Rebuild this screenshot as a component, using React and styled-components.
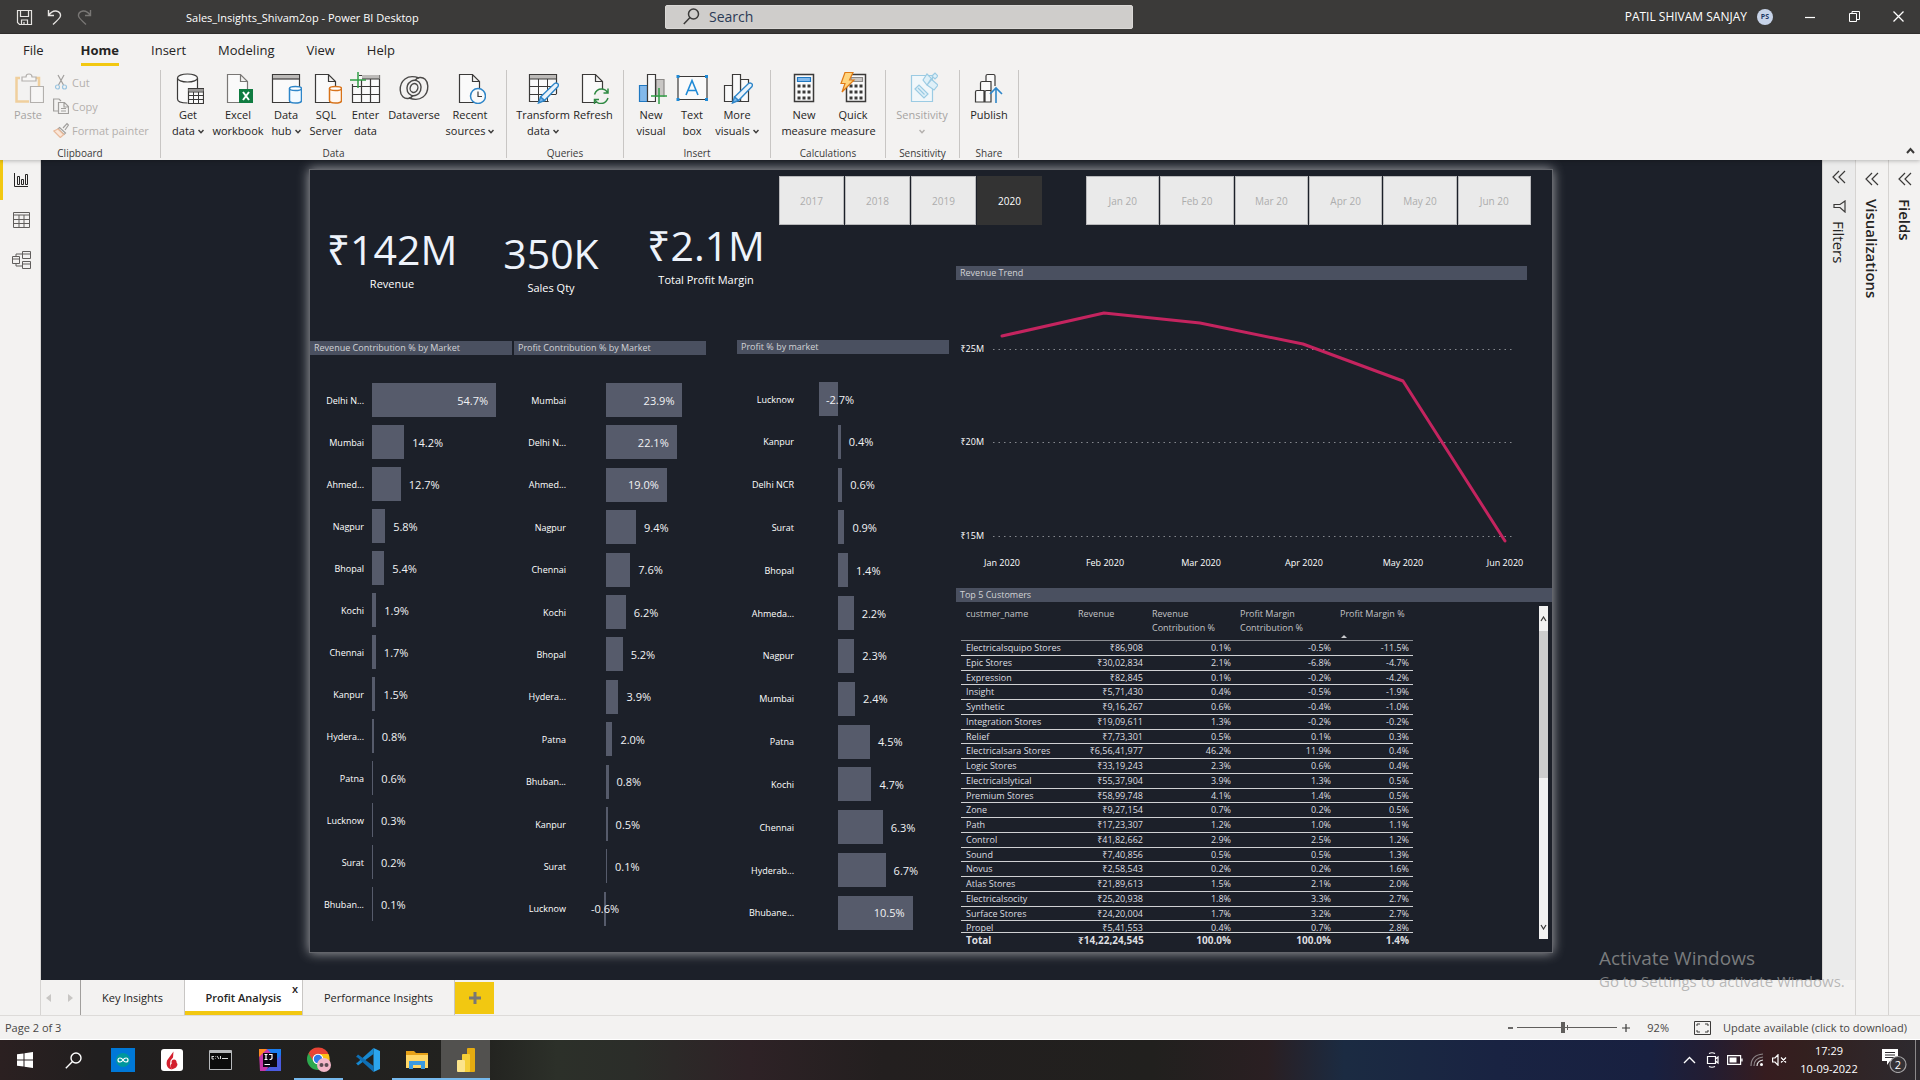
import React from "react";
import styled, { createGlobalStyle, css } from "styled-components";

const Global = createGlobalStyle`
  *, *::before, *::after { box-sizing: border-box; }
  body {
    margin: 0;
    overflow: hidden;
    background: #f3f2f1;
    color: #252423;
    font-family: "Open Sans", "Noto Sans", sans-serif;
    font-size: 11px;
  }
  button, input { font: inherit; color: inherit; margin: 0; padding: 0; border: 0; background: none; }
  h1, h2, p { margin: 0; font: inherit; }
  svg { display: block; flex: none; }
`;

const Shell = styled.div`
  display: flex;
  flex-direction: column;
  height: 100vh;
`;

/* ---------- title bar ---------- */

const TitleBar = styled.header`
  display: grid;
  grid-template-columns: 665fr 468fr 787fr;
  align-items: center;
  height: 34px;
  flex: none;
  background: #3b3a39;
  border-bottom: 1px solid #32302f;
  color: #fff;
`;
const TitleLeft = styled.div`
  display: flex;
  align-items: center;
  padding: 2px 0 0 16px;
`;
const QuickButton = styled.button`
  width: 30px;
  height: 24px;
`;
const DocTitle = styled.h1`
  margin-left: 80px;
  line-height: 16px;
  white-space: nowrap;
`;
const SearchBox = styled.label`
  display: flex;
  align-items: center;
  gap: 9px;
  height: 24px;
  padding-left: 17px;
  background: #cfcdcb;
  border: 1px solid #dad8d6;
  border-radius: 2px;
  color: #3b3a39;
`;
const SearchInput = styled.input`
  flex: 1;
  outline: none;
  font-size: 14px;
  &::placeholder { color: #2b3a55; opacity: 1; }
`;
const TitleRight = styled.div`
  display: flex;
  align-items: center;
  justify-content: flex-end;
  font-size: 12px;
`;
const Avatar = styled.span`
  display: grid;
  place-items: center;
  width: 16px;
  height: 16px;
  margin: 0 15px 0 10px;
  border-radius: 50%;
  background: #c7d3e8;
  color: #1f3864;
  font-size: 7px;
  font-weight: 700;
`;
const WindowButton = styled.button`
  display: grid;
  place-items: center;
  width: 44px;
  height: 32px;
`;

/* ---------- ribbon ---------- */

const Ribbon = styled.div`
  position: relative;
  z-index: 2;
  flex: none;
  height: 126px;
  background: #f3f2f1;
  box-shadow: 0 1px 4px rgba(0, 0, 0, 0.25);
`;
const Tabs = styled.nav`
  display: flex;
  gap: 32px;
  height: 36px;
  padding-left: 23px;
`;
const Tab = styled.button`
  height: 32px;
  padding-top: 2px;
  font-size: 13px;
  border-bottom: 3px solid ${(p) => (p.$active ? "#f2c811" : "transparent")};
  font-weight: ${(p) => (p.$active ? 700 : 400)};
  &:first-child { margin-right: 5px; }
`;
const Groups = styled.div`
  display: flex;
  height: 88px;
`;
const Group = styled.section`
  display: flex;
  flex-direction: column;
  width: ${(p) => p.$width}px;
  border-right: 1px solid #c8c6c4;
`;
const Tools = styled.div`
  display: flex;
  flex: 1;
  padding-left: ${(p) => p.$pad || 8}px;
`;
const Tool = styled.button`
  display: flex;
  flex-direction: column;
  align-items: center;
  width: ${(p) => p.$width}px;
  padding-top: 2px;
  line-height: 16px;
  white-space: nowrap;
  color: ${(p) => (p.$off ? "#a6a4a2" : "#252423")};
  svg.icon { margin-bottom: 3px; }
`;
const Line = styled.span`
  display: flex;
  align-items: center;
  gap: 3px;
  height: 16px;
`;
const GroupName = styled.h2`
  height: 12px;
  font-size: 10px;
  line-height: 14px;
  text-align: center;
  color: #3b3a39;
`;
const ClipList = styled.div`
  display: flex;
  flex-direction: column;
  margin-left: 3px;
`;
const ClipButton = styled.button`
  display: flex;
  align-items: center;
  gap: 3px;
  height: 24px;
  color: #b3b0ad;
  white-space: nowrap;
`;
const Collapse = styled.button`
  position: absolute;
  right: 5px;
  bottom: 6px;
`;

/* ---------- workspace ---------- */

const Workspace = styled.div`
  display: flex;
  flex: 1;
  min-height: 0;
`;
const Rail = styled.nav`
  display: flex;
  flex-direction: column;
  width: 41px;
  border-right: 1px solid #d6d4d2;
`;
const RailButton = styled.button`
  display: grid;
  place-items: center;
  width: 40px;
  height: 40px;
  border-left: 3px solid ${(p) => (p.$active ? "#f2c811" : "transparent")};
`;
const Center = styled.main`
  display: flex;
  flex-direction: column;
  flex: 1;
  min-width: 0;
`;
const CanvasRow = styled.div`
  display: flex;
  flex: 1;
  min-height: 0;
`;
const Canvas = styled.div`
  position: relative;
  display: flex;
  flex: 1;
  min-width: 0;
  padding: 10px 270px 28px 269px;
  background: #1c2029;
`;
const Page = styled.article`
  display: flex;
  flex-direction: column;
  flex: 1;
  min-width: 0;
  padding-top: 6px;
  background: #1c2029;
  box-shadow: 0 0 0 1px #63656b, 0 0 11px 1px #a5a6aa;
  color: #fff;
`;
const Watermark = styled.div`
  position: absolute;
  z-index: 3;
  right: -14px;
  bottom: -11px;
  color: rgba(160, 160, 160, 0.72);
  white-space: nowrap;
`;
const WatermarkTitle = styled.p`
  font-size: 19px;
  line-height: 26px;
`;
const WatermarkText = styled.p`
  width: 237px;
  font-size: 15px;
  line-height: 20px;
`;

const SlicerRow = styled.div`
  display: flex;
  justify-content: flex-end;
  gap: 44px;
  height: 49px;
  padding-right: 21px;
`;
const Slicer = styled.div`
  display: flex;
  gap: 1px;
  width: ${(p) => p.$width}px;
`;
const SlicerButton = styled.button`
  flex: 1;
  border: 1px solid ${(p) => (p.$active ? "#333" : "#b9b9bb")};
  background: ${(p) => (p.$active ? "#333" : "#eaeaea")};
  color: ${(p) => (p.$active ? "#fff" : "#adadad")};
  font-size: 10px;
`;
const Body = styled.div`
  display: grid;
  grid-template-columns: 646fr 596fr;
  flex: 1;
  min-height: 0;
`;
const Column = styled.div`
  display: flex;
  flex-direction: column;
  min-width: 0;
`;
const Kpis = styled.div`
  display: grid;
  grid-template-columns: 164fr 154fr 156fr 172fr;
  height: 115px;
`;
const Kpi = styled.div`
  display: flex;
  flex-direction: column;
  align-items: center;
  gap: 7px;
  padding-top: ${(p) => p.$top}px;
  font-size: 11px;
  line-height: 16px;
  white-space: nowrap;
`;
const KpiValue = styled.strong`
  font-size: 41px;
  font-weight: 400;
  line-height: 40px;
  color: #eef3fb;
`;
const Charts = styled.div`
  display: grid;
  grid-template-columns: 204fr 223fr 219fr;
  flex: 1;
`;
const Chart = styled.section`
  display: flex;
  flex-direction: column;
  min-width: 0;
  padding: ${(p) => p.$pad};
`;
const VisualTitle = styled.h2`
  flex: none;
  height: 14px;
  margin-right: ${(p) => p.$right || 0}px;
  padding-left: 4px;
  background: #4a5060;
  color: #d2d3d6;
  font-size: 9px;
  line-height: 14px;
  white-space: nowrap;
`;
const BarList = styled.div`
  display: flex;
  flex-direction: column;
  justify-content: space-between;
  flex: 1;
  padding-top: 28px;
`;
const BarRow = styled.div`
  display: flex;
  align-items: center;
  height: 34px;
`;
const BarName = styled.span`
  flex: none;
  width: ${(p) => p.$width}px;
  margin-right: ${(p) => p.$gap}px;
  text-align: right;
  white-space: nowrap;
  font-size: 9px;
`;
const Track = styled.div`
  display: flex;
  align-items: center;
  flex: 1;
  min-width: 0;
  height: 100%;
`;
const Bar = styled.div`
  display: flex;
  align-items: center;
  justify-content: flex-end;
  flex: none;
  min-width: 1px;
  height: 100%;
  background: #565b6b;
`;
const BarValue = styled.span`
  position: relative;
  margin: 0 8px;
  font-size: 11px;
  color: #f1f2f4;
`;
const TableArea = styled.div`
  display: flex;
  justify-content: space-between;
  padding: 0 4px 0 5px;
`;
const columns = css`
  display: grid;
  grid-template-columns: 112px 74px 88px 100px 78px;
`;
const Table = styled.table`
  display: block;
  width: 452px;
  color: #dddee0;
  font-size: 9px;
  line-height: 14px;
`;
const Thead = styled.thead`
  display: block;
  border-bottom: 1px solid #8c8e93;
`;
const HeadRow = styled.tr`
  ${columns}
  height: 38px;
`;
const Th = styled.th`
  padding: 5px 0 0 5px;
  font-weight: 400;
  text-align: left;
  color: #c3c4c7;
`;
const Sort = styled.svg`
  margin: 14px 0 0 1px;
`;
const Tbody = styled.tbody`
  display: grid;
  grid-template-rows: repeat(20, 1fr);
  height: 295px;
  margin-bottom: -4px;
  clip-path: inset(0 0 4px 0);
`;
const Tr = styled.tr`
  ${columns}
  min-height: 0;
  border-bottom: 1px solid #d0d1d3;
`;
const Td = styled.td`
  height: 13px;
  padding: 0 4px 0 5px;
  text-align: ${(p) => (p.$num ? "right" : "left")};
  white-space: nowrap;
`;
const Tfoot = styled.tfoot`
  display: block;
  border-top: 1px solid #d0d1d3;
`;
const TotalRow = styled.tr`
  ${columns}
  font-size: 10px;
  font-weight: 700;
`;
const ScrollBar = styled.div`
  display: flex;
  flex-direction: column;
  width: 9px;
  height: 333px;
  margin-top: 4px;
  background: #f1f1f1;
`;
const ScrollButton = styled.button`
  display: grid;
  place-items: center;
  height: 25px;
`;
const ScrollThumb = styled.div`
  height: 147px;
  margin-bottom: auto;
  background: #cdcdcd;
`;

/* ---------- side panes ---------- */

const Pane = styled.aside`
  display: flex;
  flex-direction: column;
  align-items: center;
  gap: ${(p) => (p.$filters ? 16 : 13)}px;
  width: ${(p) => p.$width || 33}px;
  padding-top: ${(p) => (p.$filters ? 10 : 12)}px;
  border-left: 1px solid #d6d4d2;
  background: ${(p) => (p.$filters ? "#ebebeb" : "#f3f2f1")};
`;
const PaneName = styled.span`
  display: flex;
  align-items: center;
  gap: 8px;
  writing-mode: vertical-rl;
  font-size: 15px;
  line-height: 20px;
  font-weight: ${(p) => (p.$filters ? 400 : 600)};
`;

/* ---------- page tabs and status bar ---------- */

const PageTabs = styled.nav`
  display: flex;
  height: 35px;
  flex: none;
`;
const Arrows = styled.div`
  display: flex;
  align-items: center;
  gap: 16px;
  width: 40px;
  padding-left: 5px;
  border-right: 1px solid #a19f9d;
`;
const PageTab = styled.button`
  position: relative;
  width: ${(p) => p.$width}px;
  border-right: 1px solid #c8c6c4;
  white-space: nowrap;
  ${(p) =>
    p.$active &&
    css`
      background: #fff;
      font-weight: 600;
      box-shadow: inset 0 -4px #f2c811;
    `}
`;
const CloseMark = styled.span`
  position: absolute;
  top: 1px;
  right: 4px;
`;
const AddPage = styled.button`
  display: grid;
  place-items: center;
  width: 39px;
  margin: 2px 0 1px;
  background: #f2c811;
`;
const StatusBar = styled.footer`
  display: flex;
  align-items: center;
  flex: none;
  height: 25px;
  padding: 0 6px 0 5px;
  border-top: 1px solid #dddbd9;
  border-bottom: 1px solid #fff;
  background: #f3f2f1;
  color: #484644;
`;
const ZoomControls = styled.div`
  display: flex;
  align-items: center;
  gap: 4px;
  margin-left: auto;
`;
const ZoomSlider = styled.input`
  appearance: none;
  width: 100px;
  height: 12px;
  background:
    linear-gradient(#605e5c, #605e5c) 50px 3px / 1px 5px no-repeat,
    linear-gradient(#605e5c, #605e5c) 0 5px / 100px 1px no-repeat;
  &::-webkit-slider-thumb {
    appearance: none;
    width: 4px;
    height: 11px;
    background: #605e5c;
  }
`;
const ZoomValue = styled.span`
  margin: 0 25px 0 16px;
`;
const UpdateLink = styled.a`
  width: 191px;
  margin-left: 12px;
  color: inherit;
  text-decoration: none;
  white-space: nowrap;
`;

/* ---------- taskbar ---------- */

const Taskbar = styled.footer`
  display: flex;
  flex: none;
  height: 40px;
  background: linear-gradient(
    90deg, #2b2021 0%, #211f1f 5%, #22221f 25%, #2c3029 29%, #2b2d29 33%, #2e2226 39%,
    #231f1f 46%, #21201e 60%, #2a1f22 66%, #1b2b42 70%, #192342 78%, #182040 86%,
    #231d32 89%, #361c1f 92%, #33201f 94%, #2d2a2f 100%
  );
  color: #fff;
`;
const TaskButton = styled.button`
  display: grid;
  place-items: center;
  width: 49px;
  height: 40px;
  background: ${(p) => (p.$active ? "#52514f" : "none")};
  box-shadow: ${(p) => (p.$open ? "inset 0 -2px #76b9ed" : "none")};
`;
const Tray = styled.div`
  display: flex;
  align-items: center;
  margin-left: auto;
`;
const TrayButton = styled.button`
  display: grid;
  place-items: center;
  width: ${(p) => p.$width || 22}px;
  height: 40px;
`;
const Clock = styled.time`
  width: 78px;
  line-height: 18px;
  text-align: center;
  margin-right: 5px;
`;
const Edge = styled.span`
  width: 5px;
  height: 40px;
  border-left: 1px solid #8b888a;
`;

/* ---------- icons ---------- */

const INK = "#3b3a39";
const Svg = ({ w = 32, h = 32, vw = w, vh = h, children, ...rest }) => (
  <svg width={w} height={h} viewBox={`0 0 ${vw} ${vh}`} fill="none" stroke={INK} strokeWidth="1.2" aria-hidden="true" {...rest}>
    {children}
  </svg>
);
const Big = (props) => <Svg className="icon" {...props} />;

const Chevron = ({ color = INK }) => (
  <Svg w={6} h={5} stroke={color} strokeWidth="1.5"><path d="M.5 1 3 3.7 5.500 1" /></Svg>
);
const Doc = () => <path d="M5.500 30.500V2.500h13l7 7v21z M18.500 2.500v7h7" fill="#fafafa" />;
const Pencil = () => (
  <g stroke="#2e86c9" strokeWidth="1.400">
    <path d="M13.500 25 27.500 11.500q1.500-1 3 0t.5 3L17.500 28.500z" fill="#eaf3fb" />
    <path d="M13.500 25l4 3.500-6 2.500z" fill="#83b9eb" />
  </g>
);
const Plus = ({ x, y }) => <path d={`M${x - 8} ${y}h16M${x} ${y - 8}v16`} stroke="#2f9e44" strokeWidth="1.5" />;

const icons = {
  paste: (
    <Big stroke="#b3b0ad">
      <path d="M8 6H4.500v23.500H17M24 6h3v8" stroke="#f0cf9d" strokeWidth="2.500" fill="none" />
      <path d="M10 9V5h4q0-3 3-3t3 3h4v4z" fill="#f7f6f5" />
      <path d="M18.500 14.500h13v16h-13z" fill="#f7f6f5" />
    </Big>
  ),
  getData: (
    <Big>
      <path d="M5.500 6v21q0 4 10 4V16h10V6z" fill="#fafafa" stroke="none" />
      <path d="M5.500 6v21q0 4 10 4M25.500 6v10" />
      <ellipse cx="15.500" cy="6" rx="10" ry="4" fill="#fafafa" />
      <path d="M16.500 16.500h15v15h-15z" fill="#fafafa" />
      <path d="M16.500 17h15v2.500h-15z" fill="#9b9998" stroke="none" />
      <path d="M16.500 20h15M16.500 23.500h15M16.500 27.500h15M21.500 20v11.500M26.500 20v11.500" strokeWidth="1" />
    </Big>
  ),
  excel: (
    <Big stroke="#797775">
      <Doc />
      <path d="M17 17h14v14H17z" fill="#107c41" stroke="none" />
      <path d="M21 20l6 8M27 20l-6 8" stroke="#fff" strokeWidth="2" />
    </Big>
  ),
  hub: (
    <Big>
      <path d="M2.500 2.500h27v28h-27z" fill="#fafafa" />
      <path d="M3 3h26v4H3z" fill="#bdbbb9" stroke="none" /><path d="M2.500 7h27" />
      <path d="M19.500 16.500v12q0 2.500 6 2.500t6-2.500v-12" fill="#f3faff" stroke="#2e86c9" strokeWidth="1.500" />
      <ellipse cx="25.500" cy="16.500" rx="6" ry="2" fill="#fff" stroke="#2e86c9" strokeWidth="1.500" />
    </Big>
  ),
  sql: (
    <Big>
      <Doc />
      <path d="M19.500 16.500v12q0 2.500 6 2.500t6-2.500v-12" fill="#fff8f1" stroke="#d8731a" strokeWidth="1.500" />
      <ellipse cx="25.500" cy="16.500" rx="6" ry="2" fill="#fff" stroke="#d8731a" strokeWidth="1.500" />
    </Big>
  ),
  enter: (
    <Big>
      <path d="M2.500 3.500h27v27h-27z" fill="#fafafa" />
      <path d="M12 3h17.500v4H12z" fill="#bdbbb9" stroke="none" />
      <path d="M2.500 14.500h27M2.500 22.500h27M11.500 8v22M20.500 7v23M12 7h17" />
      <path d="M0 0h9v12H0z" fill="#f3f2f1" stroke="none" /><Plus x={8} y={8} />
    </Big>
  ),
  dataverse: (
    <Big strokeWidth="1.400" stroke="#4a4948">
      <path d="M21 6C9 1.500 2 9 2.200 18c.2 6 4.300 9 8 8.500 2.300-.3 3.800-1.500 4.800-3" />
      <path d="M11 26c12 4.500 19-3 18.800-12-.2-6-4.300-9-8-8.500-2.300.3-3.800 1.500-4.800 3" />
      <ellipse cx="16" cy="16" rx="7" ry="7.800" transform="rotate(20 16 16)" />
      <ellipse cx="16" cy="16" rx="3.800" ry="4.500" transform="rotate(20 16 16)" />
    </Big>
  ),
  recent: (
    <Big>
      <Doc />
      <circle cx="24" cy="24" r="7.500" fill="#fafafa" stroke="#2e86c9" strokeWidth="1.500" />
      <path d="M24 19.500V24.500h4" stroke={INK} />
    </Big>
  ),
  transform: (
    <Big>
      <path d="M2.500 2.500h27v27h-27z" fill="#fafafa" />
      <path d="M3 3h26v4H3z" fill="#bdbbb9" stroke="none" />
      <path d="M2.500 7h27M2.500 14.500h27M2.500 22.500h27M11.500 7v22.500M20.500 7v22.500" strokeWidth="1" />
      <path d="M20 31l11-10v11z" fill="#f3f2f1" stroke="none" />
      <Pencil />
    </Big>
  ),
  refresh: (
    <Big>
      <Doc />
      <circle cx="24" cy="24.500" r="7.500" fill="#f3f2f1" stroke="none" />
      <path d="M17.500 22.500q2-5.500 7-5.500 4 0 6 3.500M31 16.500v4.500h-4.500M31 26q-2 5.500-7 5.500-4 0-6-3.500M17.500 32v-4.500H22" stroke="#2f8a43" strokeWidth="1.500" />
    </Big>
  ),
  newVisual: (
    <Big>
      <path d="M4.500 13.500h8v16h-8z" fill="#83b9eb" stroke="#1f78c1" />
      <path d="M21 7.500h8v22h-8z" fill="#c8c6c4" stroke="#8a8886" />
      <path d="M12.500 2.500h8v27h-8z" fill="#fafafa" />
      <path d="M21 25h10v6H21z" fill="#f3f2f1" stroke="none" /><Plus x={24} y={24} />
    </Big>
  ),
  textBox: (
    <Big>
      <path d="M2 4.500h29v23H2z" fill="#fafafa" />
      <path d="M10 23l6-14.500L22 23M12 18.500h8" stroke="#1f8ad6" strokeWidth="1.600" />
      <path d="M.5 3h3v3h-3zM29 3h3v3h-3zM.5 26h3v3h-3zM29 26h3v3h-3z" fill="#1f8ad6" stroke="none" />
    </Big>
  ),
  moreVisuals: (
    <Big>
      <path d="M3.500 13.500h8v16h-8zM19.500 7.500h8v22h-8z" fill="#fafafa" />
      <path d="M11.500 2.500h8v27h-8z" fill="#fafafa" /><Pencil />
    </Big>
  ),
  measure: (
    <Big>
      <path d="M6.500 2.500h19v27h-19z" fill="#fafafa" strokeWidth="1.500" />
      <path d="M9.500 5.500h13v4h-13z" fill="#83b9eb" stroke="#1f78c1" />
      <path d="M9.500 14h13M9.500 20h13M9.500 26h13" strokeWidth="3" strokeDasharray="3 2" />
    </Big>
  ),
  quick: (
    <Big>
      <path d="M9.500 2.500h19v27h-19z" fill="#fafafa" strokeWidth="1.500" />
      <path d="M14 5.500h11.500v4H14z" fill="#c8c6c4" stroke="#8a8886" />
      <path d="M12.500 14h13M12.500 20h13M12.500 26h13" strokeWidth="3" strokeDasharray="3 2" />
      <path d="M8 .5h8l-3.500 7.500H17L5 20l3-8.500H4z" fill="#ffd57f" stroke="#e07b16" />
    </Big>
  ),
  sensitivity: (
    <Big stroke="#9bcbe3">
      <path d="M5.500 3.500h21v26h-21z" fill="#f1f7fa" />
      <path d="M9 17l4-4 9 9-4 4zM12 16l6.500 6.500" fill="#dff0f8" />
      <path d="M17 8l4-6 5 5-5 6zM21 13l7 5 4-5-7-6zM26 4l3-3 3 3-3 3z" fill="#dff0f8" />
    </Big>
  ),
  publish: (
    <Big>
      <path d="M2.500 30V20q0-1.500 1.500-1.500h7V30zM7.500 18V11q0-1.500 1.500-1.500h9V18M13 9V4q0-1.500 1.500-1.500h6Q22 2.500 22 4v10M12 30V20q0-1.500 1.500-1.500H18V30z" fill="#fafafa" />
      <path d="M23 31V17M17 22l6-6 6 6" stroke="#2e86c9" strokeWidth="1.600" />
    </Big>
  ),
};

/* ---------- data ---------- */

const groups = [
  {
    name: "Data", width: 346, pad: 4,
    tools: [
      ["getData", 46, ["Get", "data"], true],
      ["excel", 54, ["Excel", "workbook"]],
      ["hub", 42, ["Data", "hub"], true],
      ["sql", 38, ["SQL", "Server"]],
      ["enter", 41, ["Enter", "data"]],
      ["dataverse", 56, ["Dataverse"]],
      ["recent", 56, ["Recent", "sources"], true],
    ],
  },
  { name: "Queries", width: 117, tools: [["transform", 56, ["Transform", "data"], true], ["refresh", 44, ["Refresh"]]] },
  {
    name: "Insert", width: 147,
    tools: [["newVisual", 38, ["New", "visual"]], ["textBox", 44, ["Text", "box"]], ["moreVisuals", 46, ["More", "visuals"], true]],
  },
  { name: "Calculations", width: 115, tools: [["measure", 50, ["New", "measure"]], ["quick", 48, ["Quick", "measure"]]] },
  { name: "Sensitivity", width: 74, off: true, tools: [["sensitivity", 56, ["Sensitivity", ""], true]] },
  { name: "Share", width: 59, tools: [["publish", 42, ["Publish"]]] },
];

const charts = [
  {
    title: "Revenue Contribution % by Market", pad: "1px 2px 31px 0", label: 54, gap: 8, scale: 1.62, inside: 20,
    rows: [["Delhi N...", 54.7], ["Mumbai", 14.2], ["Ahmed...", 12.7], ["Nagpur", 5.8], ["Bhopal", 5.4], ["Kochi", 1.9],
      ["Chennai", 1.7], ["Kanpur", 1.5], ["Hydera...", 0.8], ["Patna", 0.6], ["Lucknow", 0.3], ["Surat", 0.2], ["Bhuban...", 0.1]],
  },
  {
    title: "Profit Contribution % by Market", pad: "1px 31px 26px 0", label: 52, gap: 40, scale: 3.2, inside: 15,
    rows: [["Mumbai", 23.9], ["Delhi N...", 22.1], ["Ahmed...", 19.0], ["Nagpur", 9.4], ["Chennai", 7.6], ["Kochi", 6.2],
      ["Bhopal", 5.2], ["Hydera...", 3.9], ["Patna", 2.0], ["Bhuban...", 0.8], ["Kanpur", 0.5], ["Surat", 0.1], ["Lucknow", -0.6, 15]],
  },
  {
    title: "Profit % by market", pad: "0 7px 22px 0", label: 57, gap: 44, scale: 6.4, inside: 10,
    rows: [["Lucknow", -2.7, 12], ["Kanpur", 0.4], ["Delhi NCR", 0.6], ["Surat", 0.9], ["Bhopal", 1.4], ["Ahmeda...", 2.2],
      ["Nagpur", 2.3], ["Mumbai", 2.4], ["Patna", 4.5], ["Kochi", 4.7], ["Chennai", 6.3], ["Hyderab...", 6.7], ["Bhubane...", 10.5]],
  },
];

const customers = [
  ["Electricalsquipo Stores", "₹86,908", "0.1%", "-0.5%", "-11.5%"],
  ["Epic Stores", "₹30,02,834", "2.1%", "-6.8%", "-4.7%"],
  ["Expression", "₹82,845", "0.1%", "-0.2%", "-4.2%"],
  ["Insight", "₹5,71,430", "0.4%", "-0.5%", "-1.9%"],
  ["Synthetic", "₹9,16,267", "0.6%", "-0.4%", "-1.0%"],
  ["Integration Stores", "₹19,09,611", "1.3%", "-0.2%", "-0.2%"],
  ["Relief", "₹7,73,301", "0.5%", "0.1%", "0.3%"],
  ["Electricalsara Stores", "₹6,56,41,977", "46.2%", "11.9%", "0.4%"],
  ["Logic Stores", "₹33,19,243", "2.3%", "0.6%", "0.4%"],
  ["Electricalslytical", "₹55,37,904", "3.9%", "1.3%", "0.5%"],
  ["Premium Stores", "₹58,99,748", "4.1%", "1.4%", "0.5%"],
  ["Zone", "₹9,27,154", "0.7%", "0.2%", "0.5%"],
  ["Path", "₹17,23,307", "1.2%", "1.0%", "1.1%"],
  ["Control", "₹41,82,662", "2.9%", "2.5%", "1.2%"],
  ["Sound", "₹7,40,856", "0.5%", "0.5%", "1.3%"],
  ["Novus", "₹2,58,543", "0.2%", "0.2%", "1.6%"],
  ["Atlas Stores", "₹21,89,613", "1.5%", "2.1%", "2.0%"],
  ["Electricalsocity", "₹25,20,938", "1.8%", "3.3%", "2.7%"],
  ["Surface Stores", "₹24,20,004", "1.7%", "3.2%", "2.7%"],
  ["Propel", "₹5,41,553", "0.4%", "0.7%", "2.8%"],
];

/* ---------- parts ---------- */

const RibbonTool = ({ icon, width, lines, menu, off }) => (
  <Tool $width={width} $off={off}>
    {icons[icon]}
    {lines.map((text, i) => (
      <Line key={i}>
        {text}
        {menu && i === lines.length - 1 && <Chevron color={off ? "#b3b0ad" : INK} />}
      </Line>
    ))}
  </Tool>
);

const BarChart = ({ title, pad, label, gap, scale, inside, rows }) => (
  <Chart $pad={pad}>
    <VisualTitle>{title}</VisualTitle>
    <BarList>
      {rows.map(([name, value, over]) => {
        const size = Math.abs(value) * scale;
        const text = <BarValue style={over ? { marginLeft: -over } : undefined}>{value.toFixed(1)}%</BarValue>;
        const within = value > inside;
        return (
          <BarRow key={name}>
            <BarName $width={label} $gap={gap}>{name}</BarName>
            <Track>
              <Bar style={{ width: `${size}%`, marginLeft: value < 0 ? `${-size}%` : 0 }}>{within && text}</Bar>
              {!within && text}
            </Track>
          </BarRow>
        );
      })}
    </BarList>
  </Chart>
);

const TrendChart = () => (
  <svg width="100%" height="308" viewBox="0 0 596 308" role="img" aria-label="Revenue Trend" fontSize="9" fill="#fff">
    {[["₹25M", 69], ["₹20M", 162], ["₹15M", 256]].map(([text, y]) => (
      <g key={text}>
        <text x="28" y={y + 3} textAnchor="end">{text}</text>
        <path d={`M37 ${y + 0.5}H557`} stroke="#85888e" strokeDasharray="1.5 4" />
      </g>
    ))}
    <path d="M46 56 148 33 244 43 347 64 447 101 549 261" fill="none" stroke="#c4245f" strokeWidth="3" strokeLinejoin="round" strokeLinecap="round" />
    {[["Jan 2020", 46], ["Feb 2020", 149], ["Mar 2020", 245], ["Apr 2020", 348], ["May 2020", 447], ["Jun 2020", 549]].map(([text, x]) => (
      <text key={text} x={x} y="286" textAnchor="middle">{text}</text>
    ))}
  </svg>
);

const DoubleChevron = () => (
  <Svg w={14} h={14} strokeWidth="1.2"><path d="M7 1 1 7l6 6M13 1 7 7l6 6" /></Svg>
);

const CustomerTable = () => (
  <Table>
    <Thead>
      <HeadRow>
        <Th>custmer_name</Th>
        <Th>Revenue</Th>
        <Th>Revenue<br />Contribution %</Th>
        <Th>Profit Margin<br />Contribution %</Th>
        <Th>
          Profit Margin %
          <Sort width="6" height="3" viewBox="0 0 6 3"><path d="M0 3 3 0l3 3z" fill="#c9cacd" /></Sort>
        </Th>
      </HeadRow>
    </Thead>
    <Tbody>
      {customers.map((row) => (
        <Tr key={row[0]}>
          {row.map((cell, i) => <Td key={i} $num={i > 0}>{cell}</Td>)}
        </Tr>
      ))}
    </Tbody>
    <Tfoot>
      <TotalRow>
        {["Total", "₹14,22,24,545", "100.0%", "100.0%", "1.4%"].map((cell, i) => <Td key={i} $num={i > 0}>{cell}</Td>)}
      </TotalRow>
    </Tfoot>
  </Table>
);

const TaskIcons = {
  windows: <Svg w={16} h={16} stroke="none" fill="#fff"><path d="M0 2.300 6.500 1.400v6.100H0zM7.500 1.200 16 0v7.500H7.500zM0 8.500h6.500v6.100L0 13.700zM7.500 8.500H16V16l-8.500-1.200z" /></Svg>,
  search: <Svg w={17} h={17} stroke="#fff" strokeWidth="1.4"><circle cx="11" cy="6" r="5" /><path d="M7.500 9.500.8 16.200" /></Svg>,
  arduino: (
    <Svg w={24} h={24} stroke="none">
      <path d="M0 0h24v24H0z" fill="#0078d7" /><circle cx="12" cy="12" r="7" fill="#00979d" />
      <path d="M12 12c-1-1.600-2-2-3-2a2 2 0 000 4c1 0 2-.4 3-2s2-2 3-2a2 2 0 010 4c-1 0-2-.4-3-2z" stroke="#fff" />
    </Svg>
  ),
  red: (
    <Svg w={22} h={22} stroke="none">
      <rect width="22" height="22" rx="3" fill="#fff" />
      <path d="M12.500 2.500 6 11.500q-1.500 5.500 2 8l2.500 1-1.500-5 .5-4 2.500-3z" fill="#d3202e" />
      <path d="M10.500 20.500l-1-4.500 4-5 3 4q0 4-6 5.500z" fill="#d3202e" /><circle cx="13" cy="13" r="2.500" fill="#d3202e" />
    </Svg>
  ),
  terminal: (
    <Svg w={23} h={20} stroke="none">
      <rect width="23" height="20" rx="1" fill="#b7b9bb" /><path d="M1 3h21v16H1z" fill="#0c0c0c" />
      <path d="M3 6.500h2M3 6v3h2M6.500 6.500v.5M6.500 8.500V9M8 6l2 3M11.500 6v3M13 8.500h6" stroke="#dadada" strokeWidth="1" />
    </Svg>
  ),
  idea: (
    <Svg w={22} h={22} stroke="none">
      <path d="M0 4 6 0h7L8 22H1z" fill="#c636a8" /><path d="M0 0h8L0 8z" fill="#fe8a1f" />
      <path d="M8 0h14v14z" fill="#1a7df0" /><path d="M6 22h16V6z" fill="#4b5be0" />
      <path d="M4 4h14v14H4z" fill="#0b0612" />
      <path d="M5.500 5.500h3M7 5.500v5M5.500 10.500h3M10 5.500h3v3.500q0 1.500-2.500 1.500M5.500 15.500h5.500" stroke="#fff" strokeWidth="1.200" />
    </Svg>
  ),
  chrome: (
    <Svg w={26} h={26} stroke="none">
      <circle cx="12" cy="12" r="11" fill="#2da94f" />
      <path d="M2.500 6.500A11 11 0 0122.500 7.500L12 8z" fill="#ea4335" /><path d="M2.500 6.500 12 8l-4 7z" fill="#ea4335" />
      <path d="M22.500 7H12l5 8-4 8a11 11 0 009.500-16z" fill="#fbc116" />
      <circle cx="12" cy="12" r="5.300" fill="#fff" /><circle cx="12" cy="12" r="4.200" fill="#2f79e8" />
      <circle cx="18" cy="18" r="7" fill="#f2b6c8" /><circle cx="15.500" cy="18" r="2" fill="#5a4a52" /><circle cx="20.500" cy="18" r="2" fill="#5a4a52" />
    </Svg>
  ),
  code: (
    <Svg w={24} h={24} stroke="none">
      <path d="M17.500 0v24L24 21V3z" fill="#2ba5ee" /><path d="M17.500 0 1.500 14.500 0 15l2 2.500L17.500 6z" fill="#1789d1" />
      <path d="M17.500 24 1.500 9.500 0 9l2-2.500L17.500 18z" fill="#0f6fb4" />
    </Svg>
  ),
  explorer: (
    <Svg w={22} h={20} stroke="none">
      <path d="M0 1h8l2 2h12v15H0z" fill="#e6a118" /><path d="M0 5h22v13H0z" fill="#ffd766" />
      <path d="M3 11h16v8h-4v-4H7v4H3z" fill="#3a9ae0" />
    </Svg>
  ),
  powerbi: (
    <Svg w={20} h={24} stroke="none">
      <rect x="11" width="8" height="24" rx="1" fill="#e5ab10" /><rect x="6" y="6" width="8" height="18" rx="1" fill="#f5cf38" />
      <rect y="12" x="1" width="8" height="12" rx="1" fill="#fbe48b" />
    </Svg>
  ),
};

export default function App() {
  return (
    <Shell>
      <Global />
      <TitleBar>
        <TitleLeft>
          <QuickButton aria-label="Save">
            <Svg w={17} h={17} stroke="#e6e4e2"><path d="M1.500 1.500h14v14h-12l-2-2zM4.500 1.500v6h8v-6M5.500 15.500v-4.500h6v4.500M8 15v-2" /></Svg>
          </QuickButton>
          <QuickButton aria-label="Undo">
            <Svg w={17} h={17} stroke="#e6e4e2" strokeWidth="1.400"><path d="M2.500 1v5.500H8M2.700 6.300Q6 1.500 10 2q5 1 4.500 5-.3 2-7.500 8.500" /></Svg>
          </QuickButton>
          <QuickButton aria-label="Redo">
            <Svg w={17} h={17} stroke="#797775" strokeWidth="1.400"><path d="M14.500 1v5.500H9M14.300 6.300Q11 1.500 7 2q-5 1-4.500 5 .3 2 7.500 8.500" /></Svg>
          </QuickButton>
          <DocTitle>Sales_Insights_Shivam2op - Power BI Desktop</DocTitle>
        </TitleLeft>
        <SearchBox>
          <Svg w={17} h={17} strokeWidth="1.500"><circle cx="10.500" cy="6" r="5" /><path d="M7 9.500.8 16" /></Svg>
          <SearchInput placeholder="Search" aria-label="Search" />
        </SearchBox>
        <TitleRight>
          <span>PATIL SHIVAM SANJAY</span>
          <Avatar>PS</Avatar>
          <WindowButton aria-label="Minimize"><Svg w={10} h={10} stroke="#fff"><path d="M0 5.500h10" /></Svg></WindowButton>
          <WindowButton aria-label="Restore"><Svg w={11} h={11} stroke="#fff" strokeWidth="1"><path d="M.5 2.500h7v8h-7zM3 2.500v-2h7.500v8H8" /></Svg></WindowButton>
          <WindowButton aria-label="Close"><Svg w={11} h={11} stroke="#fff" strokeWidth="1.300"><path d="M.5.5l10 10M10.500.5l-10 10" /></Svg></WindowButton>
        </TitleRight>
      </TitleBar>

      <Ribbon>
        <Tabs>
          {["File", "Home", "Insert", "Modeling", "View", "Help"].map((t) => <Tab key={t} $active={t === "Home"}>{t}</Tab>)}
        </Tabs>
        <Groups>
          <Group $width={161}>
            <Tools $pad={6}>
              <RibbonTool icon="paste" width={44} lines={["Paste"]} off />
              <ClipList>
                <ClipButton>
                  <Svg w={16} h={16} stroke="#a19f9d"><path d="M5 1l5.500 10M11 1 5.500 11" /><circle cx="4.500" cy="13" r="2" stroke="#9bc5e0" /><circle cx="11.500" cy="13" r="2" stroke="#9bc5e0" /></Svg>
                  Cut
                </ClipButton>
                <ClipButton>
                  <Svg w={16} h={16} stroke="#a19f9d"><path d="M5 13H.6V1H6l2 2M5.500 4.500h6l4 4v7h-10zM11 4.500v4.500h4M8 10.500h5M8 13h5" /></Svg>
                  Copy
                </ClipButton>
                <ClipButton>
                  <Svg w={16} h={16} stroke="#a19f9d"><path d="M10 6l4-4.500 1.500 1.500L12 8M6.500 5.500 12.500 11 11 12.500 5 7z" /><path d="M5 7 .8 9l6.500 6.500 3.500-3z" stroke="#e8b99a" fill="#fae6d8" /></Svg>
                  Format painter
                </ClipButton>
              </ClipList>
            </Tools>
            <GroupName>Clipboard</GroupName>
          </Group>
          {groups.map((g) => (
            <Group key={g.name} $width={g.width}>
              <Tools $pad={g.pad}>
                {g.tools.map(([icon, width, lines, menu]) => (
                  <RibbonTool key={icon} icon={icon} width={width} lines={lines} menu={menu} off={g.off} />
                ))}
              </Tools>
              <GroupName>{g.name}</GroupName>
            </Group>
          ))}
        </Groups>
        <Collapse aria-label="Collapse ribbon"><Svg w={9} h={7} strokeWidth="2"><path d="M1 6l3.500-4L8 6" /></Svg></Collapse>
      </Ribbon>

      <Workspace>
        <Rail>
          <RailButton $active aria-label="Report view">
            <Svg w={15} h={15} stroke="#252423" strokeWidth="1"><path d="M.5 0v13.500H14M3.500 3.500h2v8h-2zM7.500 6.500h2v5h-2zM11.500 1.500h2v10h-2z" /></Svg>
          </RailButton>
          <RailButton aria-label="Data view">
            <Svg w={17} h={16} stroke="#605e5c" strokeWidth="1"><path d="M.5.5h16v15H.5zM.5 3h16M.5 7.500h16M.5 11.500h16M6 3v12.500M11 3v12.500" /></Svg>
          </RailButton>
          <RailButton aria-label="Model view">
            <Svg w={19} h={18} stroke="#605e5c" strokeWidth="1"><path d="M.5 5.500h7v7h-7zM.5 8h7M10.500.5h8v7h-8zM10.500 3h8M10.500 10.500h8v7h-8zM10.500 13h8M4 5.500V3h6.500M4 12.500V15h6.500" /></Svg>
          </RailButton>
        </Rail>
        <Center>
          <CanvasRow>
            <Canvas>
              <Page>
                <SlicerRow>
                  <Slicer $width={263}>
                    {["2017", "2018", "2019", "2020"].map((y) => <SlicerButton key={y} $active={y === "2020"}>{y}</SlicerButton>)}
                  </Slicer>
                  <Slicer $width={445}>
                    {["Jan", "Feb", "Mar", "Apr", "May", "Jun"].map((m) => <SlicerButton key={m}>{m} 20</SlicerButton>)}
                  </Slicer>
                </SlicerRow>
                <Body>
                  <Column>
                    <Kpis>
                      <Kpi $top={4}><KpiValue>₹142M</KpiValue>Revenue</Kpi>
                      <Kpi $top={8}><KpiValue>350K</KpiValue>Sales Qty</Kpi>
                      <Kpi $top={0}><KpiValue>₹2.1M</KpiValue>Total Profit Margin</Kpi>
                    </Kpis>
                    <Charts>
                      {charts.map((c) => <BarChart key={c.title} {...c} />)}
                    </Charts>
                  </Column>
                  <Column>
                    <Chart $pad="41px 0 0">
                      <VisualTitle $right={25}>Revenue Trend</VisualTitle>
                      <TrendChart />
                    </Chart>
                    <VisualTitle>Top 5 Customers</VisualTitle>
                    <TableArea>
                      <CustomerTable />
                      <ScrollBar>
                        <ScrollButton aria-label="Scroll up"><Svg w={7} h={6}><path d="M1 5l2.500-4L6 5" /></Svg></ScrollButton>
                        <ScrollThumb />
                        <ScrollButton aria-label="Scroll down"><Svg w={7} h={6}><path d="M1 1l2.500 4L6 1" /></Svg></ScrollButton>
                      </ScrollBar>
                    </TableArea>
                  </Column>
                </Body>
              </Page>
              <Watermark>
                <WatermarkTitle>Activate Windows</WatermarkTitle>
                <WatermarkText>Go to Settings to activate Windows.</WatermarkText>
              </Watermark>
            </Canvas>
            <Pane $filters>
              <DoubleChevron />
              <PaneName $filters>
                <Svg w={13} h={13}><path d="M12 1v11L7 7.500H1v-3h6z" /></Svg>
                Filters
              </PaneName>
            </Pane>
          </CanvasRow>
          <PageTabs>
            <Arrows>
              <Svg w={6} h={8} stroke="none"><path d="M5 0v8L0 4z" fill="#c8c6c4" /></Svg>
              <Svg w={6} h={8} stroke="none"><path d="M0 0v8l5-4z" fill="#c8c6c4" /></Svg>
            </Arrows>
            <PageTab $width={104}>Key Insights</PageTab>
            <PageTab $width={118} $active>Profit Analysis<CloseMark>x</CloseMark></PageTab>
            <PageTab $width={152}>Performance Insights</PageTab>
            <AddPage aria-label="New page"><Svg w={12} h={12} stroke="#797775" strokeWidth="3"><path d="M0 6h12M6 0v12" /></Svg></AddPage>
          </PageTabs>
        </Center>
        <Pane><DoubleChevron /><PaneName>Visualizations</PaneName></Pane>
        <Pane $width={32}><DoubleChevron /><PaneName>Fields</PaneName></Pane>
      </Workspace>

      <StatusBar>
        <span>Page 2 of 3</span>
        <ZoomControls>
          <button aria-label="Zoom out"><Svg w={5} h={10} strokeWidth="1.500"><path d="M0 5h5" /></Svg></button>
          <ZoomSlider type="range" min="0" max="200" defaultValue="92" aria-label="Zoom" />
          <button aria-label="Zoom in"><Svg w={10} h={10}><path d="M1 5h8M5 1v8" /></Svg></button>
        </ZoomControls>
        <ZoomValue>92%</ZoomValue>
        <Svg w={17} h={14} strokeWidth="1"><path d="M.5.5h16v13H.5zM3 5V3h3M11 3h3v2M3 9v2h3M11 11h3V9" /></Svg>
        <UpdateLink href="#update">Update available (click to download)</UpdateLink>
      </StatusBar>

      <Taskbar>
        {[["Start", "windows"], ["Search", "search"], ["Arduino", "arduino"], ["Diagrams", "red"], ["Terminal", "terminal"], ["IntelliJ", "idea"],
          ["Chrome", "chrome", true], ["Code", "code"], ["Explorer", "explorer", true], ["Power BI", "powerbi", true]].map(([label, icon, open]) => (
          <TaskButton key={icon} aria-label={label} $open={open} $active={icon === "powerbi"}>{TaskIcons[icon]}</TaskButton>
        ))}
        <Tray>
          <TrayButton $width={26} aria-label="Hidden icons"><Svg w={13} h={8} stroke="#fff" strokeWidth="1.400"><path d="M1 7l5.500-5.500L12 7" /></Svg></TrayButton>
          <TrayButton aria-label="Meet now"><Svg w={14} h={16} stroke="#fff"><path d="M1.500 4.500h8v7h-8zM9.500 7l2.500-2v6L9.500 9M3 1.500q3-1.500 6 0M3 14.500q3 1.500 6 0" /></Svg></TrayButton>
          <TrayButton aria-label="Battery"><Svg w={16} h={10} stroke="#fff"><path d="M.6.6h13v8.800h-13zM15 3.500v3" /><path d="M2.500 2.500h7v5h-7z" fill="#fff" stroke="none" /></Svg></TrayButton>
          <TrayButton aria-label="Network">
            <Svg w={14} h={14} stroke="#8d8688"><path d="M1 13Q1 2 13 1M4 13q0-8 9-9" /><path d="M7 13q0-5 6-6" stroke="#ddd" /><circle cx="11.500" cy="11.500" r="1.500" fill="#fff" stroke="none" /></Svg>
          </TrayButton>
          <TrayButton aria-label="Volume"><Svg w={15} h={12} stroke="#fff"><path d="M.6 4h2.400L6 .8v10.400L3 8H.6zM9 3.500l5 5M14 3.500l-5 5" /></Svg></TrayButton>
          <Clock>17:29<br />10-09-2022</Clock>
          <TrayButton $width={42} aria-label="Notifications">
            <Svg w={26} h={26} stroke="none">
              <path d="M1 2h16v12H9l-3 4v-4H1z" fill="#fff" /><path d="M4 5.500h10M4 8h10M4 10.500h10" stroke="#2d2a2f" strokeWidth="1" />
              <circle cx="17" cy="17.500" r="8" fill="#353236" stroke="#a5a3a5" />
              <text x="17" y="21.500" fill="#fff" fontSize="11" textAnchor="middle">2</text>
            </Svg>
          </TrayButton>
          <Edge />
        </Tray>
      </Taskbar>
    </Shell>
  );
}
